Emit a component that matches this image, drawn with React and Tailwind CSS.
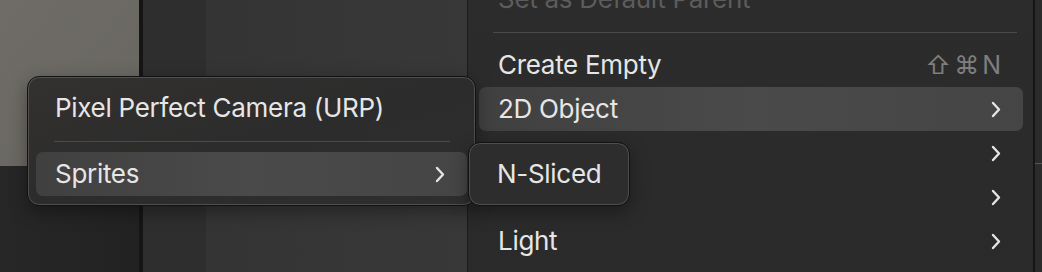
import React from 'react'

const font = { fontFamily: 'Inter, "Noto Sans", "Liberation Sans", sans-serif' }

const Chevron = () => (
  <svg width="10" height="17" viewBox="0 0 10 17" fill="none" className="shrink-0">
    <path d="M2 2 L8 8.5 L2 15" stroke="#e4e4e4" strokeWidth="2.4" strokeLinecap="round" strokeLinejoin="round" />
  </svg>
)

const Row = ({ label, active, chevron, shortcut, dim }) => (
  <div
    className={`flex items-center justify-between h-[44px] pl-[19px] pr-[22px] rounded-[7px] ${
      active ? 'bg-gradient-to-r from-[#404040] via-[#4a4a4a] to-[#454545]' : ''
    }`}
  >
    <span className={`text-[26px] leading-none tracking-[-0.3px] whitespace-nowrap ${dim ? 'text-[#5c5c5c]' : 'text-[#e6e6e6]'}`}>
      {label}
    </span>
    {chevron && <Chevron />}
    {shortcut && <span className="text-[25px] leading-none text-[#7e7e7e] tracking-[3px] -mr-[3px]">{shortcut}</span>}
  </div>
)

const Sep = ({ inset = 'mx-[18px]' }) => (
  <div className="h-[22px] flex items-center">
    <div className={`h-px flex-1 bg-[#4a4a4a] ${inset}`} />
  </div>
)

export default function App() {
  return (
    <div className="relative w-[1042px] h-[272px] overflow-hidden bg-[#2a2a2a]" style={font}>
      {/* background panels */}
      <div className="flex h-full">
        <div className="w-[139px] flex flex-col">
          <div className="h-[166px] bg-gradient-to-br from-[#6f6c68] to-[#68665f]" />
          <div className="flex-1 bg-gradient-to-r from-[#272727] to-[#222222]" />
        </div>
        <div className="w-[4px] bg-[#151515]" />
        <div className="w-[63px] bg-[#2e2e2e]" />
        <div className="w-[261px] bg-gradient-to-r from-[#343434] to-[#383838]" />
        <div className="flex-1" />
        <div className="w-[9px] border-l-2 border-[#151515] flex flex-col bg-[#2b2b2b]">
          <div className="h-[163px]" />
          <div className="h-px bg-[#555]" />
          <div className="flex-1" />
        </div>
      </div>

      {/* main menu */}
      <div className="absolute left-[467px] top-[-23px] w-[566px] h-[330px] bg-gradient-to-b from-[#2c2c2c] to-[#2a2a2a] border-l border-[#1c1c1c] pl-[11px] pr-[10px]">
        <Row label="Set as Default Parent" dim />
        <Sep inset="ml-[14px] mr-[6px]" />
        <Row label="Create Empty" shortcut="⇧⌘N" />
        <Row label="2D Object" active chevron />
        <Row label="" chevron />
        <Row label="" chevron />
        <Row label="Light" chevron />
      </div>

      {/* left submenu */}
      <div className="absolute left-[27px] top-[76px] w-[449px] rounded-[12px] border border-[#121212] bg-gradient-to-br from-[#33312f] via-[#2c2c2c] to-[#2e2e2e] shadow-[inset_0_0_0_1px_rgba(255,255,255,0.16),0_6px_18px_rgba(0,0,0,0.35)] py-[9px] px-[8px]">
        <Row label="Pixel Perfect Camera (URP)" />
        <Sep inset="ml-[18px] mr-[17px]" />
        <Row label="Sprites" active chevron />
      </div>

      {/* N-Sliced submenu */}
      <div className="absolute left-[468px] top-[142px] w-[162px] rounded-[12px] border border-[#121212] bg-[#2d2d2d] shadow-[inset_0_0_0_1px_rgba(255,255,255,0.16),0_6px_18px_rgba(0,0,0,0.35)] py-[9px] px-[9px]">
        <Row label="N-Sliced" />
      </div>
    </div>
  )
}
